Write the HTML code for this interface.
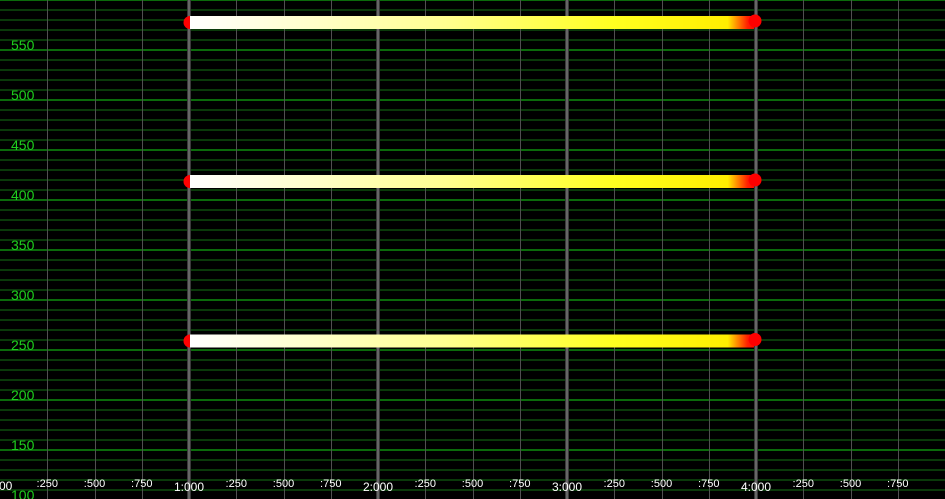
<!DOCTYPE html>
<html><head><style>
html,body{margin:0;padding:0;background:#000;overflow:hidden}
svg{display:block}
</style></head><body>
<svg width="945" height="499" xmlns="http://www.w3.org/2000/svg" font-family="Liberation Sans, sans-serif">
<defs>
<linearGradient id="g" x1="190" x2="756" gradientUnits="userSpaceOnUse">
<stop offset="0" stop-color="#ffffff"/>
<stop offset="0.45" stop-color="#ffff90"/>
<stop offset="0.75" stop-color="#ffff20"/>
<stop offset="0.95" stop-color="#ffee00"/>
<stop offset="0.985" stop-color="#ff2000"/>
<stop offset="1" stop-color="#ff0000"/>
</linearGradient>
</defs>
<rect width="945" height="499" fill="#000"/>
<g id="h"></g>
<g id="v"></g>
<g id="bars"></g>
<g id="lbl"></g>
<script>
var ns="http://www.w3.org/2000/svg";
function el(p,t,a,txt){var e=document.createElementNS(ns,t);for(var k in a)e.setAttribute(k,a[k]);if(txt)e.textContent=txt;document.getElementById(p).appendChild(e);}
for(var y=0;y<=500;y+=10){var maj=(y%50==0);el("h","rect",{x:0,y:y-1,width:945,height:2,fill:maj?"#0b6a0b":"#0a3a0a"});}
for(var i=0;i<20;i++){var x=Math.round(i*47.25);if(i%4==0&&i>0){el("v","rect",{x:x-2,y:0,width:4,height:499,fill:"#3a3a3a"});el("v","rect",{x:x-1,y:0,width:2,height:499,fill:"#666"});}else if(i>0){el("v","rect",{x:x,y:0,width:1,height:499,fill:"#505050"});}}
var ys=[22.5,181.5,341];
ys.forEach(function(c){
el("bars","circle",{cx:190,cy:c,r:6.5,fill:"#ff0000"});
el("bars","rect",{x:190,y:c-6.5,width:564,height:13,fill:"url(#g)"});
el("bars","circle",{cx:755,cy:c-1.5,r:6.5,fill:"#ff0000"});
});
var vals=[550,500,450,400,350,300,250,200,150,100];
vals.forEach(function(v){var y=600-v;el("lbl","text",{x:11,y:y,"font-size":14,fill:"#1ed01e"},String(v));});
var names=["00",":250",":500",":750","1:000",":250",":500",":750","2:000",":250",":500",":750","3:000",":250",":500",":750","4:000",":250",":500",":750"];
names.forEach(function(n,i){var x=i*47.25;var maj=n.indexOf(":")>0||i==0;
if(i==0){el("lbl","text",{x:-1,y:490,"font-size":12,fill:"#fff"},n);}
else el("lbl","text",{x:x,y:maj?491:487,"font-size":maj?12:11,fill:"#fff","text-anchor":"middle"},n);});
</script>
</svg>
</body></html>
